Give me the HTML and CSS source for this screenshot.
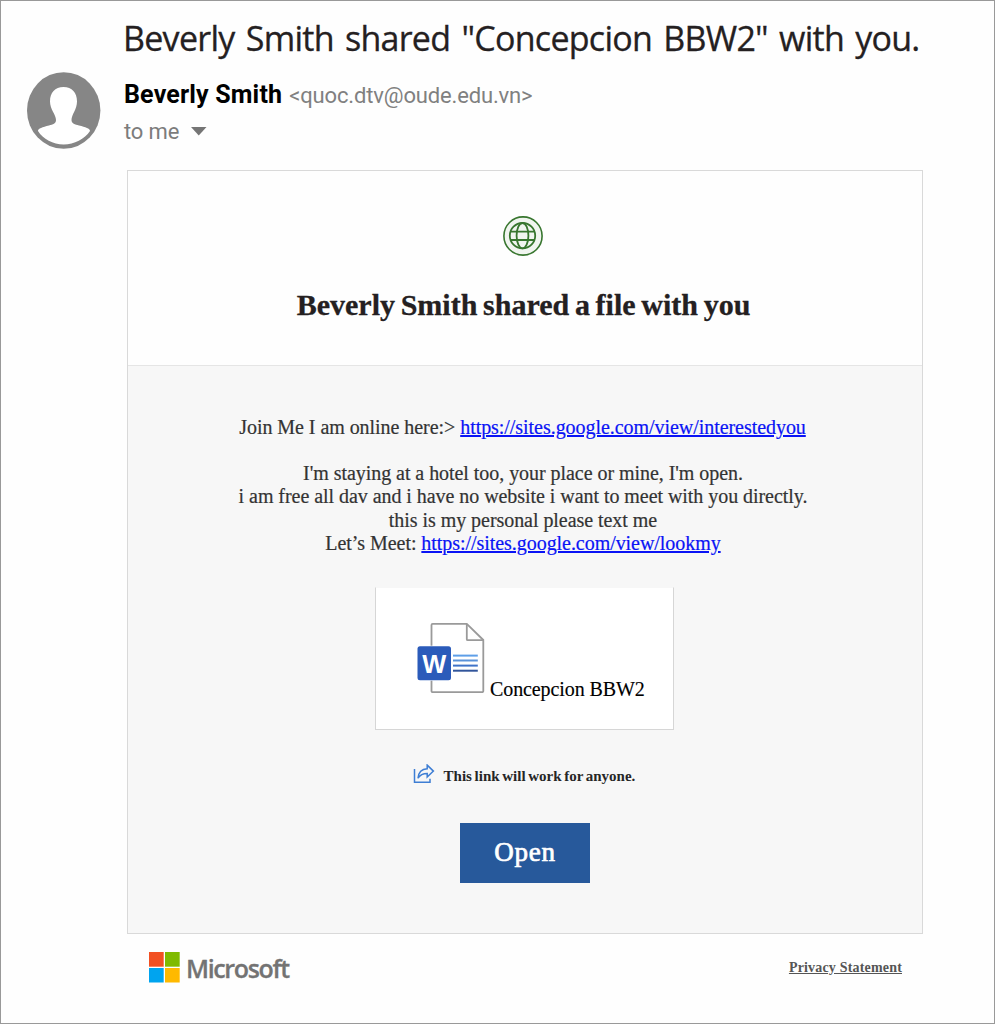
FILE: index.html
```html
<!DOCTYPE html>
<html lang="en">
<head>
<meta charset="utf-8">
<title>Shared file</title>
<link rel="stylesheet" href="styles.css">
</head>
<body>
<main class="mail">
  <h1 class="subject"><span>Beverly Smith shared "Concepcion BBW2" with you.</span></h1>
  <header class="sender">
    <svg class="avatar" width="74" height="78" viewBox="0 0 74 78">
      <ellipse cx="36.700" cy="38.500" rx="36.700" ry="38.300" fill="#868686"/>
      <path d="M36.500 15C28 15 23 20.500 23 29.500c0 8 6 13 6 18.500 0 3.500-3 4.500-7 5.500-6.500 1.500-11 3-11 5.500C16 67 26 72.500 36.700 72.500S57.500 67 63 59c0-2.500-4.500-4-11-5.500-4-1-7.500-2-7.500-5.500 0-5.500 5.500-10.500 5.500-18.500C50 20.500 45 15 36.500 15z" fill="#fff"/>
    </svg>
    <div class="who">
      <div class="from"><b class="name">Beverly Smith</b><span class="address">&lt;quoc.dtv@oude.edu.vn&gt;</span></div>
      <div class="to"><span>to me</span><svg width="16" height="9" viewBox="0 0 16 9"><path d="M0 0h15.500L7.750 8.500z" fill="#757575"/></svg></div>
    </div>
  </header>
  <section class="card">
    <div class="card-head">
      <svg class="globe" width="40" height="40" viewBox="0 0 40 40" fill="none" stroke="#38762f" stroke-width="1.800">
        <circle cx="20" cy="20" r="19.100" fill="#f1f5f0" stroke-width="1.600"/>
        <circle cx="19.500" cy="19.700" r="12.700"/>
        <ellipse cx="19.500" cy="19.700" rx="5.900" ry="12.700"/>
        <path d="M7.300 15.700h24.400M7.300 24h24.400"/>
      </svg>
      <h2 class="heading"><span>Beverly Smith shared a file with you</span></h2>
    </div>
    <div class="card-body">
      <p class="line l1">Join Me I am online here:&gt; <a href="#">https://sites.google.com/view/interestedyou</a></p>
      <div class="message">
        <p class="line l2">I'm staying at a hotel too, your place or mine, I'm open.</p>
        <p class="line l3">i am free all dav and i have no website i want to meet with you directly.</p>
        <p class="line l4">this is my personal please text me</p>
        <p class="line l5">Let’s Meet: <a href="#">https://sites.google.com/view/lookmy</a></p>
      </div>
      <div class="file">
        <svg class="word" width="68" height="72" viewBox="0 0 68 72">
          <path d="M14.500 3.100a1.200 1.200 0 0 1 1.200-1.200h34.100L66.300 18v51a1.200 1.200 0 0 1-1.200 1.200H15.700A1.200 1.200 0 0 1 14.500 69z" fill="#fff" stroke="#9a9a9a" stroke-width="1.800"/>
          <path d="M49.800 2v15.200a1 1 0 0 0 1 1h15.500" fill="none" stroke="#9a9a9a" stroke-width="1.800"/>
          <rect x=".5" y="23.700" width="35" height="35" fill="#fff"/>
          <rect x=".5" y="24.300" width="33.500" height="34" rx="2.500" fill="#2b5bba"/>
          <path d="M36 33.600h24.800" stroke="#5e9fe8" stroke-width="2"/>
          <path d="M36 38.500h24.800" stroke="#5a92d8" stroke-width="2"/>
          <path d="M36 43.600h24.800" stroke="#3f73c8" stroke-width="2"/>
          <path d="M36 48.700h24.800" stroke="#31559b" stroke-width="2"/>
          <text x="17.300" y="50.600" text-anchor="middle" textLength="24" lengthAdjust="spacingAndGlyphs" class="word-letter">W</text>
        </svg>
        <span class="file-name">Concepcion BBW2</span>
      </div>
      <div class="notice">
        <svg width="22" height="20" viewBox="0 0 22 20" fill="none" stroke="#3e7ed4" stroke-width="1.500">
          <path d="M1.500 5v13.200h15.500v-3.500"/>
          <path d="M14.200 1.100l6.200 6-6.200 6V9.500c-4 0-7 1.200-9.200 4.700C5.500 8.500 9 4.900 14.200 4.700z"/>
        </svg>
        <span>This link will work for anyone.</span>
      </div>
      <a class="open" href="#"><span>Open</span></a>
    </div>
  </section>
  <footer class="footer">
    <div class="brand">
      <svg width="31" height="31" viewBox="0 0 31 31"><path d="M0 0h14.700v14.700H0z" fill="#f25022"/><path d="M16 0h14.700v14.700H16z" fill="#7fba00"/><path d="M0 16h14.700v14.500H0z" fill="#00a4ef"/><path d="M16 16h14.700v14.500H16z" fill="#ffb900"/></svg>
      <span class="brand-name">Microsoft</span>
    </div>
    <a class="privacy" href="#">Privacy Statement</a>
  </footer>
</main>
</body>
</html>
```
FILE: styles.css
```css
* { box-sizing: border-box; }
body { margin: 0; background: #fefefe; }
p, h1, h2 { margin: 0; }
.mail {
  height: 1024px;
  border: 1px solid #999;
  display: flex;
  flex-direction: column;
  overflow: hidden;
}
.subject {
  margin: 12px 0 0 122px;
  height: 50px;
  font: 400 34px/50px "Open Sans", "Noto Sans", sans-serif;
  color: #242021;
  white-space: nowrap;
  letter-spacing: -0.72px;
  word-spacing: 3px;
  -webkit-text-stroke: 0.3px #242021;
}
.sender { display: flex; gap: 23px; padding: 9px 0 0 26px; height: 107px; }
.avatar { flex: none; }
.who { padding-top: 5px; font-family: Roboto, sans-serif; white-space: nowrap; }
.from { display: flex; align-items: baseline; gap: 7px; height: 38px; line-height: 38px; margin-top: -1px; }
.name { font-size: 25px; font-weight: 700; color: #000; letter-spacing: 0.17px; }
.address { font-size: 22px; color: #808080; letter-spacing: -0.15px; }
.to { display: flex; align-items: center; gap: 12px; height: 36px; line-height: 36px; font-size: 22px; color: #7c7c7c; letter-spacing: -0.15px; }
.to svg { margin-top: -2px; }
.card { width: 796px; height: 764px; margin-left: 126px; border: 1px solid #d9d9d9; background: #fefefe; flex: none; }
.card-head { height: 194px; display: flex; flex-direction: column; align-items: center; padding: 45px 5px 0 0; }
.heading {
  margin-top: 29px;
  padding-left: 2px;
  font: 700 30px/40px "Liberation Serif", serif;
  word-spacing: -1.8px;
  color: #242021;
  -webkit-text-stroke: 0.3px #242021;
  white-space: nowrap;
}
.card-body {
  height: 568px;
  border-top: 1px solid #e5e5e5;
  background: #f7f7f7;
  padding-top: 50px;
  display: flex;
  flex-direction: column;
  align-items: center;
}
.line { font: 20px/23.2px "Liberation Serif", serif; letter-spacing: -0.05px; color: #333; -webkit-text-stroke: 0.2px; white-space: nowrap; text-align: center; }
.l1 { padding-right: 5px; }
.line a { color: #0a14f5; }
.message { margin-top: 23px; padding-right: 4px; }
.file {
  width: 299px;
  height: 143px;
  margin-top: 32px;
  margin-right: 1px;
  padding: 34px 0 0 41px;
  display: flex;
  gap: 6px;
  background: #fff;
  border: 1px solid #d6d6d6;
  border-top-color: #f7f7f7;
}
.file-name { padding-top: 55px; margin-left: -1px; font: 20px/24px "Liberation Serif", serif; letter-spacing: -0.1px; color: #000; -webkit-text-stroke: 0.15px; white-space: nowrap; }
.word-letter { font: 700 25px "Liberation Sans", sans-serif; fill: #fff; }
.notice { margin-top: 34px; padding-right: 2px; display: flex; gap: 9px; height: 20px; font: 700 15px/24px "Liberation Serif", serif; word-spacing: -1.1px; color: #262626; white-space: nowrap; }
.open {
  width: 130px;
  height: 60px;
  margin-top: 39px;
  background: #27599b;
  color: #fff;
  text-align: center;
  text-decoration: none;
  font: 400 27px/58px "Liberation Serif", serif;
  letter-spacing: 0.8px;
  -webkit-text-stroke: 0.7px #fff;
}
.footer { display: flex; justify-content: space-between; padding: 18px 92px 0 148px; }
.brand { display: flex; gap: 7px; }
.brand-name { margin-left: -1px; font: 600 25px/32px "Open Sans", sans-serif; letter-spacing: -1.35px; color: #737373; -webkit-text-stroke: 0.3px; }
.privacy { font: 700 14px/31px "Liberation Serif", serif; letter-spacing: 0.18px; color: #555; text-decoration: underline; white-space: nowrap; }
```
